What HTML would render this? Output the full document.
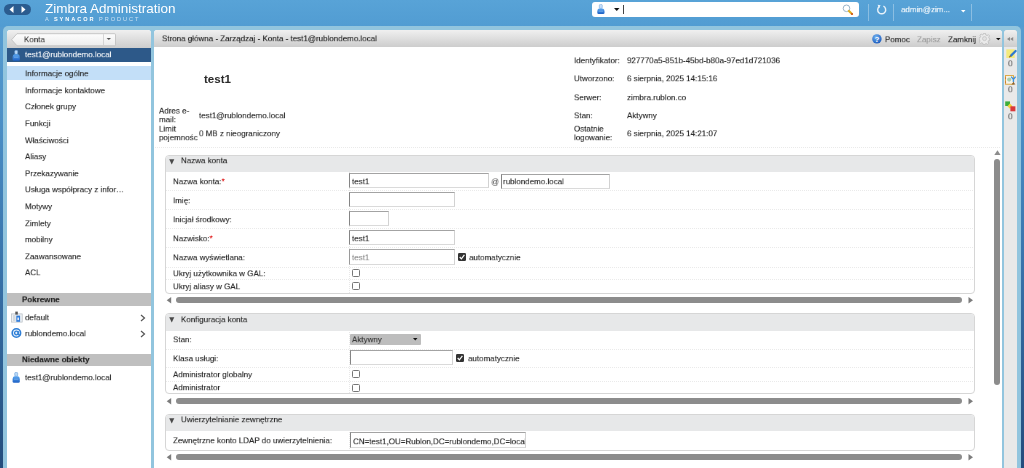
<!DOCTYPE html>
<html><head><meta charset="utf-8">
<style>
*{margin:0;padding:0;box-sizing:border-box}
html,body{width:1024px;height:468px;overflow:hidden;font-family:"Liberation Sans",sans-serif;font-size:8px;color:#222}
body{position:relative;background:linear-gradient(#5aa0d3 0px,#4b8fc6 120px,#3a76ae 250px,#234c7c 468px)}
.a{position:absolute}
.t{position:absolute;font-size:11px;line-height:12.375px;white-space:nowrap;transform:scale(0.72727);transform-origin:0 0;will-change:transform;-webkit-text-stroke:0.15px currentColor}
.u{position:absolute;white-space:nowrap;will-change:transform}
#hdr{left:0;top:0;width:1024px;height:27px;background:linear-gradient(#58a3d7,#519cd2)}
#frame{left:3.3px;top:26.3px;width:1017.7px;height:442px;background:#92c5de;border-radius:5px 5px 0 0}
.tabbar{background:linear-gradient(#f0f0f0,#e0e0e0 45%,#cdcdcd);border-radius:3px 3px 0 0}
.sep{position:absolute;width:1px;background:rgba(255,255,255,.32)}
.dot{position:absolute;height:1px;background-image:linear-gradient(90deg,#eaeaea 50%,transparent 50%);background-size:2px 1px}
.box{position:absolute;border:1px solid #d6d6d6;border-radius:4px;background:#fff;overflow:hidden}
.bhd{position:absolute;left:0;top:0;right:0;background:#e7e8e9}
.inp{position:absolute;border:1px solid #d2d2d2;border-bottom-color:#dadada;border-top-color:#a3a3a3;border-left-color:#858585;background:#fff}
.cb{position:absolute;width:8px;height:8px;border:1px solid #777;border-radius:1.5px;background:#fff}
.hs{position:absolute;height:6px;background:#8c8c8c;border-radius:3px}
</style></head><body>
<div id="hdr" class="a"></div>
<!-- nav pill -->
<div class="a" style="left:4px;top:4px;width:27px;height:11px;border-radius:6px;background:#2b5c8f"></div>
<svg class="a" style="left:8px;top:5px" width="20" height="9"><path d="M1.5 4.5 L5.5 1 L5.5 8 Z" fill="#fff"/><path d="M17.5 4.5 L13.5 1 L13.5 8 Z" fill="#fff"/></svg>
<div class="u" style="left:44.8px;top:1.8px;font-size:12.2px;line-height:14px;color:#fff;transform:scaleX(1.107);transform-origin:0 0">Zimbra Administration</div>
<div class="u" style="left:45.2px;top:15.5px;font-size:5.6px;line-height:6px;color:#cfe3f3;letter-spacing:1.95px">A <b style="color:#fff">SYNACOR</b> PRODUCT</div>

<!-- search -->
<div class="a" style="left:592px;top:1.5px;width:267px;height:15.8px;background:#fff;border-radius:3px"></div>
<svg class="a" style="left:597px;top:4.4px" width="9" height="11"><defs><linearGradient id="pg3" x1="0" y1="0" x2="0" y2="1"><stop offset="0" stop-color="#5aa6f0"/><stop offset="1" stop-color="#1c5fc4"/></linearGradient></defs><rect x="2.3" y="0.4" width="3" height="4" rx="1.1" fill="#c4defa" stroke="#6d9fd8" stroke-width="0.5"/><path d="M2 4.6 H5.6 Q7.3 4.9 7.5 7 V8.8 Q7.5 10 6.2 10 H1.6 Q0.3 10 0.3 8.8 V7 Q0.5 4.9 2 4.6 Z" fill="url(#pg3)"/><path d="M1.6 7.2 H6" stroke="#8fc3f5" stroke-width="0.6"/></svg>
<svg class="a" style="left:614px;top:8px" width="6" height="3"><path d="M0 0 H5.5 L2.75 3 Z" fill="#111"/></svg>
<div class="a" style="left:623px;top:5px;width:1px;height:9px;background:#444"></div>
<svg class="a" style="left:842px;top:4px" width="12" height="11"><circle cx="4.5" cy="4.3" r="3.3" fill="none" stroke="#9bb4c9" stroke-width="1"/><path d="M7 7 L10 10" stroke="#e0b020" stroke-width="2.2" stroke-linecap="round"/><circle cx="10" cy="10" r="0.9" fill="#d04020"/></svg>
<div class="sep" style="left:868px;top:4px;height:17px"></div>
<div class="sep" style="left:893px;top:4px;height:17px"></div>
<div class="sep" style="left:971px;top:4px;height:17px"></div>
<svg class="a" style="left:876.2px;top:3.5px" width="11" height="11"><path d="M3.3 2.6 A4 4 0 1 0 7.4 2.2" fill="none" stroke="#e8f2fa" stroke-width="1.4"/><path d="M1.6 0.8 L4.6 1.2 L3 4.2 Z" fill="#e8f2fa"/></svg>
<div class="t" style="left:901px;top:4.5px;color:#fff">admin@zim...</div>
<svg class="a" style="left:961px;top:10px" width="5" height="3"><path d="M0 0 H4.5 L2.25 2.6 Z" fill="#fff"/></svg>

<div id="frame" class="a"></div>

<!-- LEFT PANEL -->
<div class="a" style="left:7.2px;top:30px;width:144.2px;height:438px;background:#fff;border-radius:3px 3px 0 0;overflow:hidden">
  <div class="a tabbar" style="left:0;top:0;width:144.2px;height:18px"></div>
</div>
<!-- konta button -->
<svg class="a" style="left:11px;top:32.5px" width="106" height="14"><defs><linearGradient id="kg" x1="0" y1="0" x2="0" y2="1"><stop offset="0" stop-color="#fdfdfd"/><stop offset="1" stop-color="#ececec"/></linearGradient></defs><path d="M6 0.7 H103.5 Q104.5 0.7 104.5 1.7 V11.8 Q104.5 12.8 103.5 12.8 H6 L0.6 6.75 Z" fill="url(#kg)" stroke="#bdbdbd" stroke-width="0.8"/><line x1="92.5" y1="1.2" x2="92.5" y2="12.3" stroke="#cdcdcd" stroke-width="0.8"/><path d="M95.6 5 H100 L97.8 7 Z" fill="#555"/></svg>
<div class="t" style="left:23.5px;top:34.6px;color:#333">Konta</div>
<div class="a" style="left:7.2px;top:48px;width:144px;height:13.7px;background:#2d5989"></div>
<svg class="a" style="left:12px;top:49.6px" width="9" height="12"><defs><linearGradient id="pg1" x1="0" y1="0" x2="0" y2="1"><stop offset="0" stop-color="#5aa6f0"/><stop offset="1" stop-color="#1c5fc4"/></linearGradient></defs><rect x="2.7" y="0.3" width="3" height="4" rx="1.2" fill="#b8d8f6" stroke="#5d95d6" stroke-width="0.5"/><path d="M2.4 4.3 H6 Q7.6 4.6 7.8 7 V9.4 Q7.8 10.8 6.4 10.8 H2 Q0.6 10.8 0.6 9.4 V7 Q0.8 4.6 2.4 4.3 Z" fill="url(#pg1)"/><path d="M2 7.2 H6.4" stroke="#8fc3f5" stroke-width="0.6"/></svg>
<div class="t" style="left:24.8px;top:50px;color:#fff">test1@rublondemo.local</div>
<div class="a" style="left:7.2px;top:66px;width:144.2px;height:13.6px;background:#c3dff8"></div>
<div class="t" style="left:24.8px;top:69px">Informacje ogólne</div>
<div class="t" style="left:24.8px;top:85.6px">Informacje kontaktowe</div>
<div class="t" style="left:24.8px;top:102.2px">Członek grupy</div>
<div class="t" style="left:24.8px;top:118.9px">Funkcji</div>
<div class="t" style="left:24.8px;top:135.5px">Właściwości</div>
<div class="t" style="left:24.8px;top:152.1px">Aliasy</div>
<div class="t" style="left:24.8px;top:168.7px">Przekazywanie</div>
<div class="t" style="left:24.8px;top:185.3px">Usługa współpracy z infor…</div>
<div class="t" style="left:24.8px;top:202px">Motywy</div>
<div class="t" style="left:24.8px;top:218.6px">Zimlety</div>
<div class="t" style="left:24.8px;top:235.2px">mobilny</div>
<div class="t" style="left:24.8px;top:251.8px">Zaawansowane</div>
<div class="t" style="left:24.8px;top:268.4px">ACL</div>

<div class="a" style="left:7.2px;top:293.4px;width:144.2px;height:12.2px;background:#bfbfbf"></div>
<div class="t" style="left:21.6px;top:294.6px;font-weight:bold">Pokrewne</div>
<svg class="a" style="left:10.5px;top:311px" width="12" height="12"><rect x="0.6" y="2.9" width="10.6" height="8.2" fill="#eef1f4" stroke="#b5bcc3" stroke-width="0.7"/><rect x="2" y="4" width="2.5" height="6" fill="#d5dade"/><rect x="4.3" y="0.6" width="2.5" height="3" fill="#555"/><rect x="5.3" y="4.6" width="3.8" height="6.2" fill="#2f7bd8"/><rect x="6.4" y="6.5" width="1.6" height="2.6" fill="#dfeaf8"/></svg>
<div class="t" style="left:24.7px;top:312.5px">default</div>
<svg class="a" style="left:140px;top:313.5px" width="6" height="8"><path d="M1 1 L4.5 4 L1 7" fill="none" stroke="#555" stroke-width="1.2"/></svg>
<svg class="a" style="left:10.5px;top:328px" width="12" height="11"><circle cx="5.4" cy="5" r="4.2" fill="#e6f0fb" stroke="#2f7fd6" stroke-width="1.6"/><circle cx="5.4" cy="5" r="1.8" fill="none" stroke="#2f7fd6" stroke-width="1.3"/><path d="M7.2 3 V6.2 Q7.6 7.4 9.4 6.6" fill="none" stroke="#2f7fd6" stroke-width="1.2"/></svg>
<div class="t" style="left:24.7px;top:329px">rublondemo.local</div>
<svg class="a" style="left:140px;top:330px" width="6" height="8"><path d="M1 1 L4.5 4 L1 7" fill="none" stroke="#555" stroke-width="1.2"/></svg>

<div class="a" style="left:7.2px;top:354.1px;width:144.2px;height:12px;background:#bfbfbf"></div>
<div class="t" style="left:21.6px;top:355.4px;font-weight:bold">Niedawne obiekty</div>
<svg class="a" style="left:12px;top:372.3px" width="9" height="12"><defs><linearGradient id="pg2" x1="0" y1="0" x2="0" y2="1"><stop offset="0" stop-color="#5aa6f0"/><stop offset="1" stop-color="#1c5fc4"/></linearGradient></defs><rect x="2.7" y="0.3" width="3" height="4" rx="1.2" fill="#b8d8f6" stroke="#5d95d6" stroke-width="0.5"/><path d="M2.4 4.3 H6 Q7.6 4.6 7.8 7 V9.4 Q7.8 10.8 6.4 10.8 H2 Q0.6 10.8 0.6 9.4 V7 Q0.8 4.6 2.4 4.3 Z" fill="url(#pg2)"/><path d="M2 7.2 H6.4" stroke="#8fc3f5" stroke-width="0.6"/></svg>
<div class="t" style="left:24.7px;top:373.2px">test1@rublondemo.local</div>

<!-- MAIN PANEL -->
<div class="a" style="left:153.7px;top:30px;width:848.3px;height:438px;background:#fff;border-radius:3px 3px 0 0;overflow:hidden">
  <div class="a tabbar" style="left:0;top:0;width:848.3px;height:17.4px"></div>
</div>
<div class="t" style="left:161.7px;top:34.4px">Strona główna - Zarządzaj - Konta - test1@rublondemo.local</div>
<svg class="a" style="left:871.5px;top:33.5px" width="10" height="10"><defs><radialGradient id="hg" cx="0.4" cy="0.3" r="0.7"><stop offset="0" stop-color="#6fb0f0"/><stop offset="1" stop-color="#1f5fbf"/></radialGradient></defs><circle cx="4.9" cy="4.9" r="4.7" fill="url(#hg)"/><text x="4.9" y="8" font-size="8" font-weight="bold" font-family="Liberation Sans" fill="#fff" text-anchor="middle">?</text></svg>
<div class="t" style="left:884.8px;top:34.7px">Pomoc</div>
<div class="t" style="left:917px;top:34.7px;color:#9a9a9a">Zapisz</div>
<div class="t" style="left:947.7px;top:34.7px">Zamknij</div>
<svg class="a" style="left:979px;top:33px" width="12" height="12"><g transform="translate(5.5 5.6)"><path d="M-1 -5.2 H1 L1.3 -3.6 L2.6 -3 L3.9 -3.9 L5.1 -2.7 L4.2 -1.4 L4.7 -0.1 L5.3 0.2 V1.8 L4.1 2 L3.5 3.3 L4.3 4.6 L3 5.8 L1.8 4.9 L0.6 5.3 L0.3 6 H-1.3 L-1.6 4.7 L-2.9 4.1 L-4.2 4.9 L-5.3 3.7 L-4.5 2.5 L-5 1.1 L-5.5 0.9 V-0.8 L-4.4 -1 L-3.9 -2.3 L-4.6 -3.5 L-3.4 -4.6 L-2.2 -3.8 L-1.2 -4.2 Z" fill="#eaeaea" stroke="#bdbdbd" stroke-width="0.8"/><circle r="2" fill="#e2e2e2" stroke="#c4c4c4" stroke-width="0.8"/></g></svg>
<svg class="a" style="left:995.5px;top:37.5px" width="5" height="3"><path d="M0 0 H4.6 L2.3 2.3 Z" fill="#111"/></svg>

<!-- right strip -->
<div class="a" style="left:1004.4px;top:30px;width:12.7px;height:438px;background:#e9e9e9;border-radius:3px 3px 0 0;overflow:hidden">
  <div class="a tabbar" style="left:0;top:0;width:12.7px;height:17.4px"></div>
</div>
<svg class="a" style="left:1007.2px;top:36.6px" width="7" height="5"><path d="M0 2 L3 0 V4 Z M3.2 2 L6.2 0 V4 Z" fill="#8a8a8a"/></svg>
<svg class="a" style="left:1005.5px;top:48.5px" width="11" height="10"><rect x="0.3" y="0.3" width="8.4" height="8.7" fill="#f3ea7c"/><path d="M5 6.6 L9.6 2" stroke="#2d78d0" stroke-width="2.2" stroke-linecap="round"/><path d="M3.2 8.2 L4.8 6.8" stroke="#a07020" stroke-width="1.2"/></svg>
<div class="t" style="left:1008.3px;top:59.1px;color:#555;font-size:11.3px">0</div>
<svg class="a" style="left:1004.6px;top:74.6px" width="11" height="10"><rect x="0.5" y="0.6" width="8" height="8.6" fill="#f6f4ea" stroke="#d8a030" stroke-width="0.9"/><circle cx="0.6" cy="3" r="0.5" fill="#c03020"/><circle cx="0.6" cy="7" r="0.5" fill="#c03020"/><circle cx="4.2" cy="4.6" r="2.1" fill="#a8cdb0"/><path d="M6.2 1.6 L8.4 4.4 L10.6 1.6 M8.4 4.4 V7" stroke="#3f90dc" stroke-width="1.4" fill="none"/><path d="M6.4 9.4 L8.4 7 L10.4 9.4 Z" fill="#8a6030"/></svg>
<div class="t" style="left:1008.3px;top:85.4px;color:#555;font-size:11.3px">0</div>
<svg class="a" style="left:1004.6px;top:100.5px" width="11" height="11"><rect x="0.2" y="0.4" width="4.8" height="4.6" fill="#3cae3c"/><path d="M5 2.6 L7.6 5.2 L5 7.8 L2.4 5.2 Z" fill="#f2d23a"/><rect x="5.4" y="5.3" width="5" height="5" fill="#d9383c"/></svg>
<div class="t" style="left:1008.3px;top:112px;color:#555;font-size:11.3px">0</div>

<!-- header info -->
<div class="u" style="left:204.2px;top:72.8px;font-size:11.6px;line-height:12px;font-weight:bold;color:#2a2a2a">test1</div>
<div class="t" style="left:159.2px;top:107.2px;line-height:11.96px">Adres e-<br>mail:</div>
<div class="t" style="left:199.2px;top:110.9px">test1@rublondemo.local</div>
<div class="t" style="left:159.2px;top:124.6px;line-height:11.96px">Limit<br>pojemnośc</div>
<div class="t" style="left:199.4px;top:128.6px">0 MB z nieograniczony</div>

<div class="t" style="left:573.5px;top:56.2px">Identyfikator:</div>
<div class="t" style="left:627px;top:56.2px">927770a5-851b-45bd-b80a-97ed1d721036</div>
<div class="t" style="left:573.5px;top:74.2px">Utworzono:</div>
<div class="t" style="left:627px;top:74.2px">6 sierpnia, 2025 14:15:16</div>
<div class="t" style="left:573.5px;top:92.8px">Serwer:</div>
<div class="t" style="left:627px;top:92.8px">zimbra.rublon.co</div>
<div class="t" style="left:573.5px;top:111.4px">Stan:</div>
<div class="t" style="left:627px;top:111.4px">Aktywny</div>
<div class="t" style="left:573.5px;top:124.6px;line-height:11.96px">Ostatnie<br>logowanie:</div>
<div class="t" style="left:627px;top:128.6px">6 sierpnia, 2025 14:21:07</div>
<div class="dot" style="left:155px;top:146.5px;width:845px"></div>

<!-- SECTION 1 -->
<div class="box" style="left:165.3px;top:155.4px;width:809.5px;height:138.6px">
  <div class="bhd" style="height:16px"></div>
</div>
<div class="a" style="left:349px;top:171.5px;width:1px;height:121px;background-image:linear-gradient(#e8e8e8 50%,transparent 50%);background-size:1px 2px"></div>
<svg class="a" style="left:168.5px;top:158.6px" width="6" height="6"><path d="M0.2 0.3 H5.3 L2.75 5.4 Z" fill="#4a4a4a"/></svg>
<div class="t" style="left:181.3px;top:156.3px">Nazwa konta</div>
<div class="dot" style="left:166px;top:190.4px;width:808px"></div>
<div class="dot" style="left:166px;top:209.1px;width:808px"></div>
<div class="dot" style="left:166px;top:227.9px;width:808px"></div>
<div class="dot" style="left:166px;top:247.2px;width:808px"></div>
<div class="dot" style="left:166px;top:266.6px;width:808px"></div>
<div class="dot" style="left:166px;top:279.1px;width:808px"></div>

<div class="t" style="left:172.5px;top:177.2px">Nazwa konta:<span style="color:#d00">*</span></div>
<div class="t" style="left:172.5px;top:196px">Imię:</div>
<div class="t" style="left:172.5px;top:215px">Inicjał środkowy:</div>
<div class="t" style="left:172.5px;top:234px">Nazwisko:<span style="color:#d00">*</span></div>
<div class="t" style="left:172.5px;top:252.9px">Nazwa wyświetlana:</div>
<div class="t" style="left:172.5px;top:268.9px">Ukryj użytkownika w GAL:</div>
<div class="t" style="left:172.5px;top:282.1px">Ukryj aliasy w GAL</div>

<div class="inp" style="left:349.2px;top:173.2px;width:139.8px;height:15.3px"></div>
<div class="t" style="left:352.4px;top:177.2px;color:#222">test1</div>
<div class="t" style="left:491.3px;top:177.2px;color:#666">@</div>
<div class="inp" style="left:500.6px;top:173.6px;width:109px;height:15px"></div>
<div class="t" style="left:503.3px;top:177.2px;color:#222">rublondemo.local</div>
<div class="inp" style="left:349.2px;top:191.9px;width:106.1px;height:15.4px"></div>
<div class="inp" style="left:349.2px;top:211.2px;width:39.5px;height:15.3px"></div>
<div class="inp" style="left:349.2px;top:230.2px;width:106.1px;height:15.3px"></div>
<div class="t" style="left:352.4px;top:234px;color:#222">test1</div>
<div class="inp" style="left:349.2px;top:249.4px;width:106.1px;height:15.3px;border-top-color:#a8a8a8;border-left-color:#9a9a9a"></div>
<div class="t" style="left:352.4px;top:252.9px;color:#888">test1</div>
<svg class="a" style="left:458.1px;top:252.8px" width="9" height="9"><rect x="0" y="0" width="8" height="8" rx="1.3" fill="#333"/><path d="M1.7 4 L3.4 5.9 L6.4 1.9" fill="none" stroke="#fff" stroke-width="1.2"/></svg>
<div class="t" style="left:468.8px;top:252.9px">automatycznie</div>
<div class="cb" style="left:352px;top:268.6px"></div>
<div class="cb" style="left:352px;top:281.6px"></div>

<!-- hscroll 1 -->
<svg class="a" style="left:166px;top:297px" width="6" height="7"><path d="M5.2 0 V6.4 L0.7 3.2 Z" fill="#7c7c7c"/></svg>
<div class="hs" style="left:176px;top:297.2px;width:786px;height:5.8px"></div>
<svg class="a" style="left:967.5px;top:297px" width="6" height="7"><path d="M0.5 0 V6.4 L5 3.2 Z" fill="#7c7c7c"/></svg>

<!-- SECTION 2 -->
<div class="box" style="left:165.3px;top:313.3px;width:809.5px;height:81px">
  <div class="bhd" style="height:16.4px"></div>
</div>
<div class="a" style="left:349px;top:329.8px;width:1px;height:64px;background-image:linear-gradient(#e8e8e8 50%,transparent 50%);background-size:1px 2px"></div>
<svg class="a" style="left:168.5px;top:316.6px" width="6" height="6"><path d="M0.2 0.3 H5.3 L2.75 5.4 Z" fill="#4a4a4a"/></svg>
<div class="t" style="left:181.3px;top:314.7px">Konfiguracja konta</div>
<div class="dot" style="left:166px;top:348.9px;width:808px"></div>
<div class="dot" style="left:166px;top:367.2px;width:808px"></div>
<div class="dot" style="left:166px;top:381.1px;width:808px"></div>
<div class="t" style="left:172.5px;top:334.8px">Stan:</div>
<div class="t" style="left:172.5px;top:354.3px">Klasa usługi:</div>
<div class="t" style="left:172.5px;top:370.4px">Administrator globalny</div>
<div class="t" style="left:172.5px;top:383.2px">Administrator</div>
<div class="a" style="left:349.7px;top:334px;width:71px;height:10.7px;background:#bdbdbd;border-radius:1px"></div>
<div class="t" style="left:352px;top:334.9px;color:#333">Aktywny</div>
<svg class="a" style="left:412.5px;top:338.3px" width="5" height="3"><path d="M0 0 H4.5 L2.25 2.4 Z" fill="#111"/></svg>
<div class="inp" style="left:349.7px;top:350.2px;width:103px;height:15.3px"></div>
<svg class="a" style="left:456.2px;top:354.1px" width="9" height="9"><rect x="0" y="0" width="8" height="8" rx="1.3" fill="#333"/><path d="M1.7 4 L3.4 5.9 L6.4 1.9" fill="none" stroke="#fff" stroke-width="1.2"/></svg>
<div class="t" style="left:468.1px;top:354.4px">automatycznie</div>
<div class="cb" style="left:352px;top:370.3px"></div>
<div class="cb" style="left:352px;top:383.6px"></div>
<svg class="a" style="left:166px;top:397.7px" width="6" height="7"><path d="M5.2 0 V6.4 L0.7 3.2 Z" fill="#7c7c7c"/></svg>
<div class="hs" style="left:176px;top:398px;width:786px;height:5.8px"></div>
<svg class="a" style="left:967.5px;top:397.7px" width="6" height="7"><path d="M0.5 0 V6.4 L5 3.2 Z" fill="#7c7c7c"/></svg>

<!-- SECTION 3 -->
<div class="box" style="left:165.3px;top:414.4px;width:809.5px;height:36.2px">
  <div class="bhd" style="height:15.5px"></div>
</div>
<div class="a" style="left:349px;top:430px;width:1px;height:20px;background-image:linear-gradient(#e8e8e8 50%,transparent 50%);background-size:1px 2px"></div>
<svg class="a" style="left:168.5px;top:417.8px" width="6" height="6"><path d="M0.2 0.3 H5.3 L2.75 5.4 Z" fill="#4a4a4a"/></svg>
<div class="t" style="left:181.3px;top:415.3px">Uwierzytelnianie zewnętrzne</div>
<div class="t" style="left:172.5px;top:436px">Zewnętrzne konto LDAP do uwierzytelnienia:</div>
<div class="inp" style="left:349.5px;top:432.2px;width:176.4px;height:15.4px;overflow:hidden"><div class="t" style="left:2px;top:3.8px;color:#222">CN=test1,OU=Rublon,DC=rublondemo,DC=local</div></div>
<svg class="a" style="left:166px;top:453.7px" width="6" height="7"><path d="M5.2 0 V6.4 L0.7 3.2 Z" fill="#7c7c7c"/></svg>
<div class="hs" style="left:176px;top:454.1px;width:786px;height:5.8px"></div>
<svg class="a" style="left:967.5px;top:453.7px" width="6" height="7"><path d="M0.5 0 V6.4 L5 3.2 Z" fill="#7c7c7c"/></svg>

<!-- vertical scroll -->
<svg class="a" style="left:993.5px;top:149.5px" width="7" height="6"><path d="M0.3 5 H6.6 L3.45 0.2 Z" fill="#8c8c8c"/></svg>
<div class="a" style="left:994.1px;top:159.1px;width:5.7px;height:225.5px;background:#8c8c8c;border-radius:3px"></div>
</body></html>
